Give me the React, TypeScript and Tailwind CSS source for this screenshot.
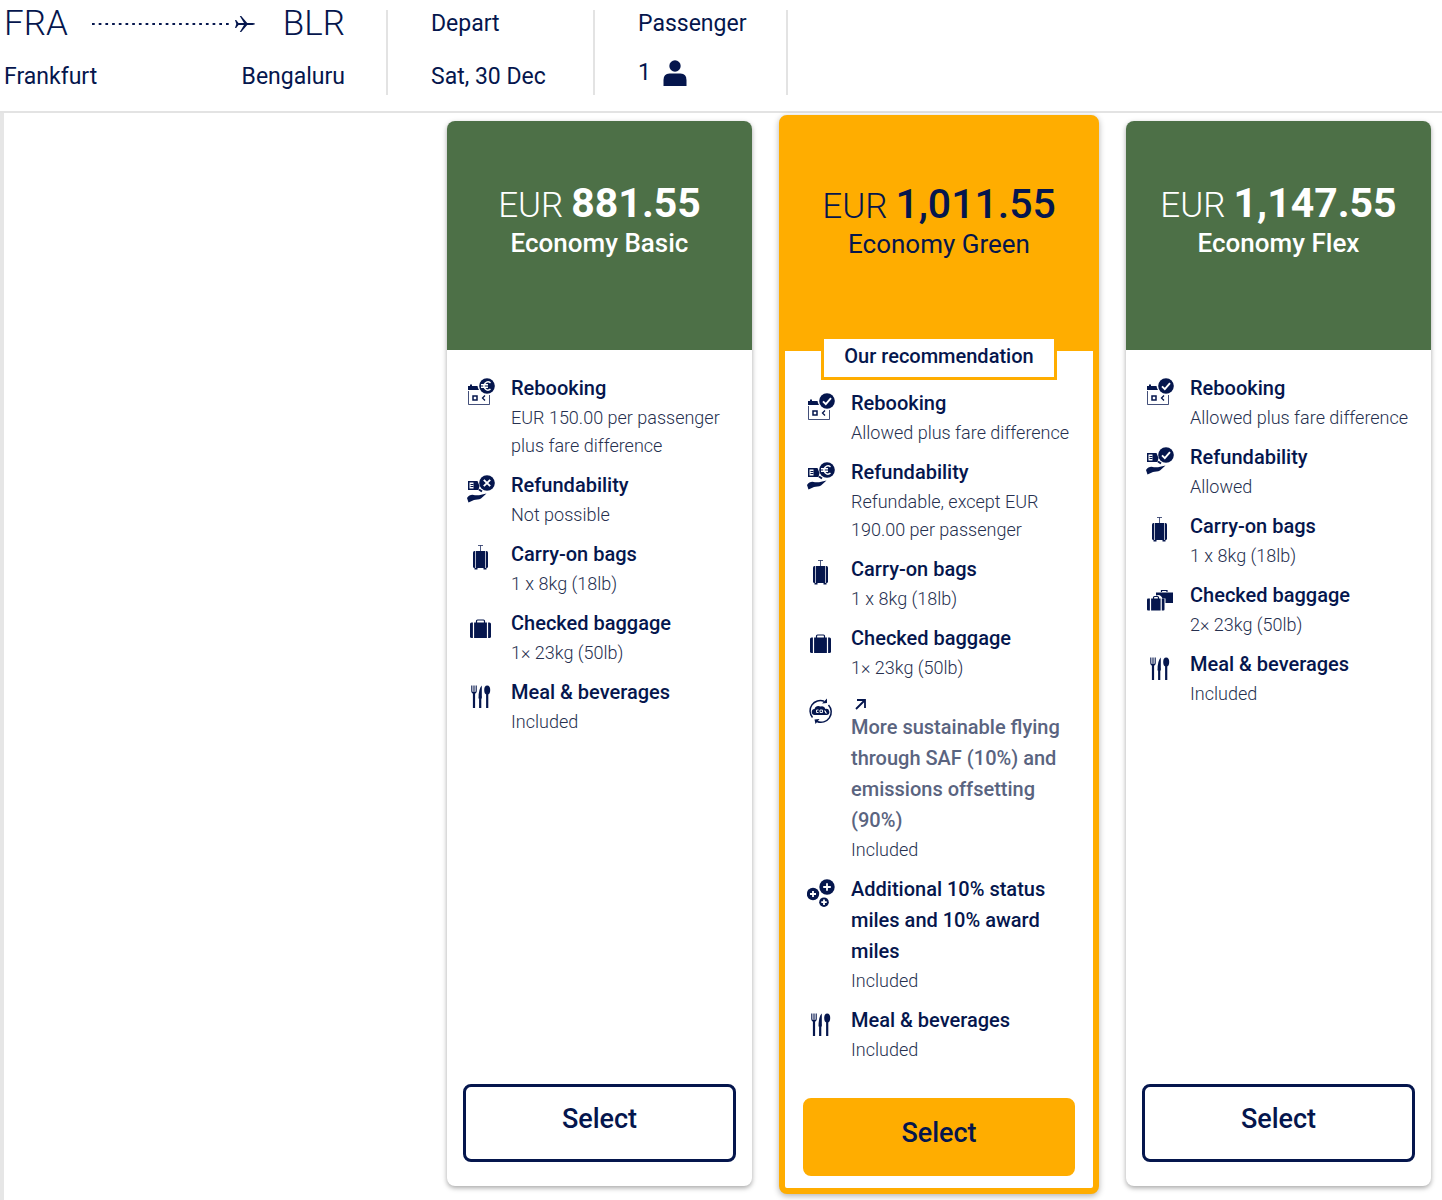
import { ReactNode } from 'react';
import clsx from 'clsx';

type IconName =
    | 'rebookFee'
    | 'rebookOk'
    | 'refundNo'
    | 'refundFee'
    | 'refundOk'
    | 'carryOn'
    | 'bag'
    | 'bags'
    | 'meal'
    | 'co2'
    | 'miles';

type Feature = {
    icon: IconName;
    title: string;
    text: string;
    link?: boolean;
};

type Fare = {
    name: string;
    price: string;
    recommended?: boolean;
    features: Feature[];
};

const fares: Fare[] = [
    {
        name: 'Economy Basic',
        price: '881.55',
        features: [
            { icon: 'rebookFee', title: 'Rebooking', text: 'EUR 150.00 per passenger plus fare difference' },
            { icon: 'refundNo', title: 'Refundability', text: 'Not possible' },
            { icon: 'carryOn', title: 'Carry-on bags', text: '1 x 8kg (18lb)' },
            { icon: 'bag', title: 'Checked baggage', text: '1× 23kg (50lb)' },
            { icon: 'meal', title: 'Meal & beverages', text: 'Included' },
        ],
    },
    {
        name: 'Economy Green',
        price: '1,011.55',
        recommended: true,
        features: [
            { icon: 'rebookOk', title: 'Rebooking', text: 'Allowed plus fare difference' },
            { icon: 'refundFee', title: 'Refundability', text: 'Refundable, except EUR 190.00 per passenger' },
            { icon: 'carryOn', title: 'Carry-on bags', text: '1 x 8kg (18lb)' },
            { icon: 'bag', title: 'Checked baggage', text: '1× 23kg (50lb)' },
            {
                icon: 'co2',
                title: 'More sustainable flying through SAF (10%) and emissions offsetting (90%)',
                text: 'Included',
                link: true,
            },
            { icon: 'miles', title: 'Additional 10% status miles and 10% award miles', text: 'Included' },
            { icon: 'meal', title: 'Meal & beverages', text: 'Included' },
        ],
    },
    {
        name: 'Economy Flex',
        price: '1,147.55',
        features: [
            { icon: 'rebookOk', title: 'Rebooking', text: 'Allowed plus fare difference' },
            { icon: 'refundOk', title: 'Refundability', text: 'Allowed' },
            { icon: 'carryOn', title: 'Carry-on bags', text: '1 x 8kg (18lb)' },
            { icon: 'bags', title: 'Checked baggage', text: '2× 23kg (50lb)' },
            { icon: 'meal', title: 'Meal & beverages', text: 'Included' },
        ],
    },
];

const Calendar = () => (
    <>
        <path d="M1 12V8h2V6.500h2V8h5.500a9 9 0 0 0 1.500 4z" />
        <path d="M1.500 13v13.500h21V17" fill="none" stroke="currentColor" strokeOpacity=".75" />
        <path d="M6 18h4v4H6z" fill="none" stroke="currentColor" strokeWidth="1.500" />
        <path d="M18 17.500 15.500 20l2.500 2.500" fill="none" stroke="currentColor" strokeWidth="1.300" />
    </>
);

const Hand = () => (
    <>
        <path d="M1 6h9.500l2 5-1 4H1z" />
        <path d="M2.500 7.500h4v6h-4z" fill="#fff" />
        <path d="M3.500 9.500h3M3.500 11.500h3" stroke="currentColor" />
        <path d="M12 14.500l3 2" stroke="currentColor" strokeWidth="2" />
        <path d="M0 23c2-3 5-4 8-2.700h4l7.500-1.800-5.500 5c-2 1.500-5 .8-7 1.500L1.500 27.500z" />
    </>
);

const Badge = ({ children }: { children: ReactNode }) => (
    <>
        <circle cx="20" cy="8" r="7.800" />
        <g fill="none" stroke="#fff" strokeWidth="1.900">
            {children}
        </g>
    </>
);

const euro = <path d="M23.500 4.800a4 4 0 1 0 0 6.400M14 6.800h7M14 9.200h7" strokeWidth="1.500" />;
const check = <path d="m16 8.300 2.800 2.800 5.200-6" />;
const cross = <path d="m16.800 4.800 6.400 6.400m0-6.400-6.400 6.400" />;

const icons: Record<IconName, ReactNode> = {
    rebookFee: <><Calendar /><Badge>{euro}</Badge></>,
    rebookOk: <><Calendar /><Badge>{check}</Badge></>,
    refundNo: <><Hand /><Badge>{cross}</Badge></>,
    refundFee: <><Hand /><Badge>{euro}</Badge></>,
    refundOk: <><Hand /><Badge>{check}</Badge></>,
    carryOn: (
        <>
            <path d="M11 1.500h5M13.500 1.500V7" stroke="currentColor" strokeOpacity=".7" />
            <rect x="6" y="7" width="15" height="17" rx="1.500" />
            <path d="M8.500 7v17M18.500 7v17" stroke="#fff" strokeOpacity=".7" />
            <path d="M7.500 24h3v1.500h-3zM16.500 24h3v1.500h-3z" />
        </>
    ),
    bag: (
        <>
            <path d="M9.500 10V8q0-1 1-1h6q1 0 1 1v2" fill="none" stroke="currentColor" strokeWidth="1.200" />
            <rect x="3" y="9.500" width="21" height="15.500" rx="1.500" />
            <path d="M6.500 9v16.500M20.500 9v16.500" stroke="#fff" strokeWidth="1.200" />
        </>
    ),
    bags: (
        <>
            <path d="M15.500 7V5.500h5.500V7" fill="none" stroke="currentColor" strokeWidth="1.200" />
            <path d="M10 7.500h17V18h-7.500v-4.500h-3q-2-5-6.500-3z" />
            <path d="M7.500 14v-1.500q0-1 1-1h3q1 0 1 1V14" fill="none" stroke="currentColor" strokeWidth="1.200" />
            <rect x="1" y="13.500" width="17.500" height="12" rx="1" />
            <path d="M4.500 13v13M15.200 13v13" stroke="#fff" strokeWidth="1.200" />
        </>
    ),
    meal: (
        <>
            <path d="M4.800 3.500v5.500q0 2 2.200 2t2.200-2V3.500M7 3.500v7" fill="none" stroke="currentColor" strokeWidth="1.100" />
            <path d="M7 10v16M13.200 14v12M20.200 12v14" stroke="currentColor" strokeWidth="2.200" />
            <path d="M14.800 3.500v13h-3.300q0-10 3.300-13z" />
            <ellipse cx="20.200" cy="8" rx="3" ry="4.600" />
        </>
    ),
    co2: (
        <>
            <path d="M17 4.200A10.300 10.300 0 0 0 5.500 20.500M10 24.500A10.300 10.300 0 0 0 21.500 8" fill="none" stroke="currentColor" strokeWidth="1.500" />
            <path d="M15 6.500 20 6V1.500zM12.500 22l-5 .5 1 4.500z" />
            <path d="M8 18a3 3 0 0 1-.5-6 4 4 0 0 1 6-2.500 4 4 0 0 1 5 2.500 3 3 0 0 1 1.500 6z" />
            <path d="M11.500 13H9.500v2.500h2M13 13h2.500v2.500H13zM17 14h1.500v2H20" fill="none" stroke="#fff" strokeWidth=".9" />
        </>
    ),
    miles: (
        <>
            <circle cx="20" cy="8" r="7.700" />
            <circle cx="6" cy="15" r="6.200" />
            <circle cx="17" cy="23.200" r="4.800" />
            <path d="M20 4.200v7.600M16.200 8h7.600M6 12v6M3 15h6M17 20.500v5.400M14.300 23.200h5.400" stroke="#fff" strokeWidth="1.800" />
        </>
    ),
};

function FeatureRow({ feature }: { feature: Feature }) {
    return (
        <li className="flex gap-4">
            <svg viewBox="0 0 28 28" fill="currentColor" className="mt-[5px] h-7 w-7 shrink-0" aria-hidden="true">
                {icons[feature.icon]}
            </svg>
            <div>
                <h3 className="text-xl leading-[31px] font-medium">
                    {feature.link ? (
                        <a href="#saf" className="text-[#5a6480]">
                            <svg viewBox="0 0 20 20" className="block h-5 w-5 text-[#05164d]" fill="none" stroke="currentColor" strokeWidth="1.800" aria-hidden="true">
                                <path d="M5 17 13.500 8.500M6 8h8v8" />
                            </svg>
                            {feature.title}
                        </a>
                    ) : (
                        feature.title
                    )}
                </h3>
                <p className="text-lg leading-7 font-light text-[#26304f]">{feature.text}</p>
            </div>
        </li>
    );
}

function FareCard({ fare }: { fare: Fare }) {
    const { name, price, recommended, features } = fare;
    return (
        <article
            className={clsx(
                'flex flex-col rounded-lg bg-white',
                recommended
                    ? 'border-6 border-[#ffad00] shadow-[0_2px_6px_rgba(0,0,0,0.3)]'
                    : 'mt-[6px] mb-2 shadow-[0_2px_5px_rgba(0,0,0,0.35)]'
            )}
        >
            <header
                className={clsx(
                    'relative text-center',
                    recommended ? 'h-[230px] bg-[#ffad00] pt-[59px]' : 'h-[229px] rounded-t-lg bg-[#4d7047] pt-[58px] text-white'
                )}
            >
                <p className="flex items-baseline justify-center gap-2 leading-[48px]">
                    <span className="text-[35px] font-light">EUR</span>
                    <span className={clsx('text-[41px]', recommended ? 'font-medium' : 'font-bold')}>{price}</span>
                </p>
                <h2 className={clsx('text-[26px] leading-[26px]', !recommended && 'font-medium')}>{name}</h2>
                {recommended && (
                    <p className="absolute inset-x-9 -bottom-[29px] border-3 border-[#ffad00] bg-white pb-1 text-xl leading-[34px] font-medium">
                        Our recommendation
                    </p>
                )}
            </header>
            <ul className={clsx('flex flex-col gap-[10px] pr-3', recommended ? 'pt-[37px] pl-[22px]' : 'pt-[23px] pl-5')}>
                {features.map((feature) => (
                    <FeatureRow key={feature.title} feature={feature} />
                ))}
            </ul>
            <div className={clsx('mt-auto', recommended ? 'px-[18px] pt-[34px] pb-3' : 'px-4 pt-8 pb-6')}>
                <button
                    type="button"
                    className={clsx(
                        'h-[78px] w-full rounded-lg border-3 pb-2 text-[27px] font-medium',
                        recommended ? 'border-[#ffad00] bg-[#ffad00]' : 'border-[#05164d] bg-white'
                    )}
                >
                    Select
                </button>
            </div>
        </article>
    );
}

export default function App() {
    return (
        <div className="bg-white font-['Roboto','Liberation_Sans',sans-serif] text-[#05164d]">
            <header className="flex border-b-2 border-[#e3e3e3] pt-[10px] pb-4 text-[23px]">
                <div className="flex w-[388px] flex-col justify-between border-r-2 border-[#e3e3e3] pr-[41px] pl-1">
                    <div className="flex items-center leading-7">
                        <span className="text-[35px] font-light">FRA</span>
                        <div className="mr-7 ml-6 flex min-w-0 flex-1 items-center gap-[6px]">
                            <svg className="h-[2px] w-0 flex-1" aria-hidden="true">
                                <line x1="0" y1="1" x2="100%" y2="1" stroke="currentColor" strokeWidth="2" strokeDasharray="2.700 4" />
                            </svg>
                            <svg viewBox="0 0 20 18" className="h-[18px] w-5 shrink-0" fill="currentColor" aria-hidden="true">
                                <path d="M0 5h1.200L3.500 8.100H9L4.800 1h1.400l6 7.100h5.300q2.500.2 2.500.9t-2.500.9h-5.300l-6 7.100H4.800L9 9.900H3.500L1.200 13H0l1.300-4z" />
                            </svg>
                        </div>
                        <span className="text-[35px] font-light">BLR</span>
                    </div>
                    <div className="flex justify-between leading-9">
                        <span>Frankfurt</span>
                        <span>Bengaluru</span>
                    </div>
                </div>
                <div className="flex w-[207px] flex-col justify-between border-r-2 border-[#e3e3e3] pl-[43px]">
                    <span className="leading-7">Depart</span>
                    <span className="leading-9">Sat, 30 Dec</span>
                </div>
                <div className="flex w-[193px] flex-col justify-between gap-[17px] border-r-2 border-[#e3e3e3] pl-[43px]">
                    <span className="leading-7">Passenger</span>
                    <span className="flex items-center gap-3 pb-1 leading-9">
                        1
                        <svg viewBox="0 0 24 26" className="h-[26px] w-6" fill="currentColor" aria-label="adult">
                            <circle cx="12" cy="6" r="5.700" />
                            <path d="M.5 26v-6q0-6.500 6-6.500h11q6 0 6 6.500v6z" />
                        </svg>
                    </span>
                </div>
            </header>
            <main className="grid grid-cols-[416fr_305fr_320fr_305fr] gap-x-[27px] border-l-4 border-[#e6e6e6] pt-[2px] pr-[11px] pb-[6px]">
                <div />
                {fares.map((fare) => (
                    <FareCard key={fare.name} fare={fare} />
                ))}
            </main>
        </div>
    );
}
